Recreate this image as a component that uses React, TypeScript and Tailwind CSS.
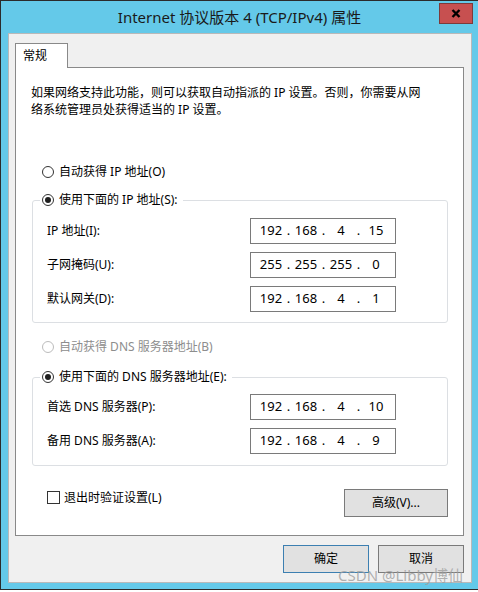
import React from 'react';

const font = { fontFamily: '"Noto Sans", "Noto Sans CJK SC", sans-serif' };

const Radio = ({ checked, disabled }: { checked?: boolean; disabled?: boolean }) => (
    <span
        className={`w-[12px] h-[12px] rounded-full border bg-white flex items-center justify-center shrink-0 ${disabled ? 'border-[#bcbcbc]' : 'border-[#333333]'
            }`}
    >
        {checked && <span className="w-[6px] h-[6px] rounded-full bg-[#1f1f1f]" />}
    </span>
);

const IpBox = ({ parts }: { parts: string[] }) => (
    <div className="w-[146px] h-[26px] border border-[#7a7a7a] bg-white flex items-center pl-[5px] text-[13px] text-black">
        {parts.map((p, i) => (
            <React.Fragment key={i}>
                <span className="w-[30px] text-center">{p}</span>
                {i < 3 && <span className="w-[5px] text-center">.</span>}
            </React.Fragment>
        ))}
    </div>
);

const Row = ({ label, parts }: { label: string; parts: string[] }) => (
    <div className="flex items-center">
        <span className="w-[217px] pl-[14px] text-[12px]">{label}</span>
        <IpBox parts={parts} />
    </div>
);

const Group = ({
    legend,
    className,
    children,
}: {
    legend: string;
    className: string;
    children: React.ReactNode;
}) => (
    <div className={`relative w-[416px] border border-[#dcdfe3] rounded-[3px] flex flex-col gap-[8px] ${className}`}>
        <div className="absolute left-[7px] top-[-11px] h-[20px] flex items-center gap-[5px] bg-white pl-[2px] pr-[5px] text-[12px]">
            <Radio checked />
            <span>{legend}</span>
        </div>
        {children}
    </div>
);

export default function App() {
    return (
        <div className="relative w-[478px] h-[592px] bg-white overflow-hidden text-black" style={font}>
            <div className="w-[478px] h-[590px] bg-[#64c9e9] border-l border-t border-b border-[#2b2b2b] flex flex-col">
                {/* title bar */}
                <div className="relative h-[32px] flex items-center justify-center">
                    <span className="text-[15px] text-[#1a1a1a]">Internet 协议版本 4 (TCP/IPv4) 属性</span>
                    <button className="absolute right-[5px] top-[2px] w-[34px] h-[21px] bg-[#c75050] border border-[#7d3a3a] flex items-center justify-center">
                        <svg width="10" height="9" viewBox="0 0 10 9">
                            <path d="M1.5 1 L8.5 8 M8.5 1 L1.5 8" stroke="#000" strokeWidth="2.4" />
                        </svg>
                    </button>
                </div>

                {/* client area */}
                <div className="ml-[7px] w-[464px] h-[550px] bg-[#f0f0f0] border border-[#b9b9b9] pl-[6px] pt-[9px]">
                    <div className="relative z-10 w-[53px] h-[25px] -mb-px bg-white border-l border-t border-r border-[#898989] pl-[7px] pt-[3px] text-[12px] leading-[17px]">
                        常规
                    </div>
                    <div className="w-[449px] h-[469px] bg-white border border-[#898989] pl-[16px] pt-[16px] flex flex-col text-[12px]">
                        <p className="-ml-px leading-[17px]">
                            如果网络支持此功能，则可以获取自动指派的 IP 设置。否则，你需要从网
                            <br />
                            络系统管理员处获得适当的 IP 设置。
                        </p>

                        <div className="mt-[45px] h-[18px] pl-[10px] flex items-center gap-[5px]">
                            <Radio />
                            <span>自动获得 IP 地址(O)</span>
                        </div>

                        <Group legend="使用下面的 IP 地址(S):" className="mt-[19px] pt-[17px] pb-[10px]">
                            <Row label="IP 地址(I):" parts={['192', '168', '4', '15']} />
                            <Row label="子网掩码(U):" parts={['255', '255', '255', '0']} />
                            <Row label="默认网关(D):" parts={['192', '168', '4', '1']} />
                        </Group>

                        <div className="mt-[15px] h-[18px] pl-[10px] flex items-center gap-[5px] text-[#8d8d8d]">
                            <Radio disabled />
                            <span>自动获得 DNS 服务器地址(B)</span>
                        </div>

                        <Group legend="使用下面的 DNS 服务器地址(E):" className="mt-[21px] pt-[16px] pb-[11px]">
                            <Row label="首选 DNS 服务器(P):" parts={['192', '168', '4', '10']} />
                            <Row label="备用 DNS 服务器(A):" parts={['192', '168', '4', '9']} />
                        </Group>

                        <div className="mt-[23px] w-[416px] flex items-start justify-between">
                            <label className="mt-[2px] h-[13px] pl-[15px] flex items-center gap-[4px]">
                                <span className="w-[13px] h-[13px] border border-[#333333] bg-white" />
                                <span>退出时验证设置(L)</span>
                            </label>
                            <button className="w-[104px] h-[28px] bg-[#e1e1e1] border border-[#7a7a7a]">高级(V)...</button>
                        </div>
                    </div>

                    <div className="mt-[9px] w-[449px] flex justify-end gap-[9px] text-[12px]">
                        <button className="w-[86px] h-[28px] bg-[#e1e1e1] border border-[#3c7fb1]">确定</button>
                        <button className="w-[86px] h-[28px] bg-[#e1e1e1] border border-[#7a7a7a]">取消</button>
                    </div>
                </div>
            </div>

            {/* watermark */}
            <div className="absolute right-[15px] bottom-[9px] text-[15px] leading-[15px] text-[#9e9e9e]/80">
                CSDN @Libby博仙
            </div>
        </div>
    );
}
